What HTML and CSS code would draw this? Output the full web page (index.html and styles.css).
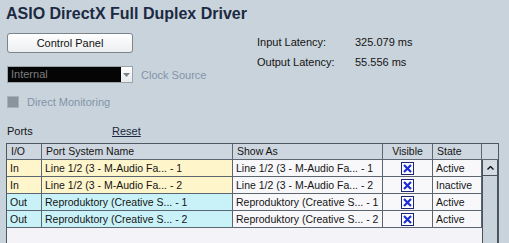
FILE: index.html
```html
<!DOCTYPE html>
<html lang="en">

<head>
    <meta charset="UTF-8" />
    <title>ASIO DirectX Full Duplex Driver</title>
    <link rel="stylesheet" href="styles.css">
</head>

<body>
    <div class="page">
        <h1>ASIO DirectX Full Duplex Driver</h1>

        <div class="top">
            <div class="left">
                <button class="btn">Control Panel</button>

                <div class="select-row">
                    <div class="select">
                        <span class="select-text">Internal</span>
                        <span class="select-arrow">
                            <svg width="7" height="4" viewBox="0 0 7 4"><path d="M0 0h7L3.5 4z" fill="#7a7f86"/></svg>
                        </span>
                    </div>
                    <span class="muted">Clock Source</span>
                </div>

                <div class="check-row">
                    <span class="check-off"></span>
                    <span class="muted">Direct Monitoring</span>
                </div>
            </div>

            <div class="right">
                <div class="lat-row"><span class="lat-label">Input Latency:</span><span>325.079 ms</span></div>
                <div class="lat-row"><span class="lat-label">Output Latency:</span><span>55.556 ms</span></div>
            </div>
        </div>

        <div class="ports-row">
            <span class="ports-label">Ports</span>
            <a class="reset" href="#">Reset</a>
        </div>

        <div class="ports">
            <div class="grid">
                <div class="row head">
                    <div class="cell">I/O</div>
                    <div class="cell">Port System Name</div>
                    <div class="cell">Show As</div>
                    <div class="cell center">Visible</div>
                    <div class="cell">State</div>
                </div>
                <div class="row in">
                    <div class="cell c">In</div>
                    <div class="cell c">Line 1/2 (3 - M-Audio Fa... - 1</div>
                    <div class="cell">Line 1/2 (3 - M-Audio Fa... - 1</div>
                    <div class="cell center"><span class="xbox"><svg width="9" height="9" viewBox="0 0 9 9"><path d="M1 1l7 7M8 1l-7 7" stroke="#1c2ed6" stroke-width="2.2"/></svg></span></div>
                    <div class="cell">Active</div>
                </div>
                <div class="row in">
                    <div class="cell c">In</div>
                    <div class="cell c">Line 1/2 (3 - M-Audio Fa... - 2</div>
                    <div class="cell">Line 1/2 (3 - M-Audio Fa... - 2</div>
                    <div class="cell center"><span class="xbox"><svg width="9" height="9" viewBox="0 0 9 9"><path d="M1 1l7 7M8 1l-7 7" stroke="#1c2ed6" stroke-width="2.2"/></svg></span></div>
                    <div class="cell">Inactive</div>
                </div>
                <div class="row out">
                    <div class="cell c">Out</div>
                    <div class="cell c">Reproduktory (Creative S... - 1</div>
                    <div class="cell">Reproduktory (Creative S... - 1</div>
                    <div class="cell center"><span class="xbox"><svg width="9" height="9" viewBox="0 0 9 9"><path d="M1 1l7 7M8 1l-7 7" stroke="#1c2ed6" stroke-width="2.2"/></svg></span></div>
                    <div class="cell">Active</div>
                </div>
                <div class="row out">
                    <div class="cell c">Out</div>
                    <div class="cell c">Reproduktory (Creative S... - 2</div>
                    <div class="cell">Reproduktory (Creative S... - 2</div>
                    <div class="cell center"><span class="xbox"><svg width="9" height="9" viewBox="0 0 9 9"><path d="M1 1l7 7M8 1l-7 7" stroke="#1c2ed6" stroke-width="2.2"/></svg></span></div>
                    <div class="cell">Active</div>
                </div>
            </div>

            <div class="scroll">
                <div class="scroll-head"></div>
                <div class="scroll-up">
                    <svg width="7" height="4" viewBox="0 0 7 4"><path d="M0.5 3.5L3.5 0.5L6.5 3.5" stroke="#111" stroke-width="1.4" fill="none"/></svg>
                </div>
                <div class="scroll-track"></div>
            </div>
        </div>
    </div>
</body>

</html>
```

FILE: styles.css
```css
/* Global */
html,
body {
    margin: 0;
    height: 243px;
    overflow: hidden;
}

body {
    background: #c9d3db;
    font-family: 'Liberation Sans', Arial, sans-serif;
    font-size: 11px;
    color: #141414;
}

.page {
    padding: 4px 0 0 7px;
}

h1 {
    margin: 0 0 0 -1px;
    font-size: 16px;
    line-height: 20px;
    font-weight: bold;
    color: #1b2a42;
}

/* Top area */
.top {
    display: flex;
}

.left {
    width: 126px;
}

.btn {
    display: block;
    width: 126px;
    height: 20px;
    margin-top: 9px;
    padding: 0;
    border: 1px solid #7c848c;
    border-radius: 3px;
    background: linear-gradient(#ffffff, #eceef0);
    font-family: inherit;
    font-size: 11px;
    color: #111;
}

.select-row {
    display: flex;
    align-items: center;
    margin-top: 13px;
    height: 17px;
    white-space: nowrap;
}

.select {
    display: flex;
    width: 126px;
    height: 17px;
    box-sizing: border-box;
    background: #050505;
    border: 1px solid #9aa2aa;
    flex-shrink: 0;
}

.select-text {
    flex: 1;
    padding-left: 3px;
    line-height: 15px;
    color: #7d7d7d;
}

.select-arrow {
    width: 11px;
    display: flex;
    align-items: center;
    justify-content: center;
    background: linear-gradient(#ffffff, #e6e8ea);
}

.muted {
    color: #8293a9;
}

.select-row .muted {
    margin-left: 8px;
}

.check-row {
    display: flex;
    align-items: center;
    margin-top: 13px;
    height: 12px;
    white-space: nowrap;
}

.check-off {
    width: 12px;
    height: 12px;
    box-sizing: border-box;
    background: #89959d;
    border: 1px solid #a6b0b8;
    margin-right: 8px;
    flex-shrink: 0;
}

.right {
    margin-left: 124px;
    margin-top: 8px;
}

.lat-row {
    display: flex;
    line-height: 20px;
}

.lat-label {
    width: 98px;
}

/* Ports */
.ports-row {
    display: flex;
    margin-top: 16px;
    line-height: 14px;
}

.ports-label {
    width: 105px;
}

.reset {
    color: #1b2a42;
    text-decoration: underline;
}

.ports {
    display: flex;
    margin: 5px 0 0 -1px;
    width: 493px;
    height: 110px;
    box-sizing: border-box;
    border: 1px solid #4f5962;
    border-bottom: none;
    background: #f4f4f8;
    font-size: 10.5px;
}

.grid {
    width: 475px;
}

.row {
    display: grid;
    grid-template-columns: 35px 191px 150px 50px 49px;
    height: 17px;
}

.row.head {
    height: 16px;
    background: #ced7df;
}

.cell {
    box-sizing: border-box;
    border-right: 1px solid #5c6670;
    border-bottom: 1px solid #5c6670;
    padding-left: 3px;
    line-height: 16px;
    white-space: nowrap;
    overflow: hidden;
    background: #f8f8fb;
}

.head .cell {
    background: #ced7df;
    line-height: 15px;
    padding-left: 4px;
}

.in .c {
    background: #fff5cb;
}

.out .c {
    background: #c9f2f8;
}

.center {
    display: flex;
    justify-content: center;
    align-items: center;
    padding-left: 0;
}

.head .center {
    padding-left: 0;
}

.xbox {
    width: 13px;
    height: 13px;
    box-sizing: border-box;
    border: 1px solid #1d2670;
    background: #fff;
    display: flex;
    align-items: center;
    justify-content: center;
}

/* Scrollbar */
.scroll {
    width: 16px;
    display: flex;
    flex-direction: column;
}

.scroll-head {
    height: 16px;
    box-sizing: border-box;
    background: #ced7df;
    border-bottom: 1px solid #5c6670;
}

.scroll-up {
    height: 16px;
    box-sizing: border-box;
    border: 1px solid #48525a;
    border-top: none;
    background: #d4dce3;
    display: flex;
    align-items: center;
    justify-content: center;
}

.scroll-track {
    flex: 1;
    box-sizing: border-box;
    border-left: 1px solid #48525a;
    border-right: 1px solid #48525a;
    background: #c9d3db;
}
```
